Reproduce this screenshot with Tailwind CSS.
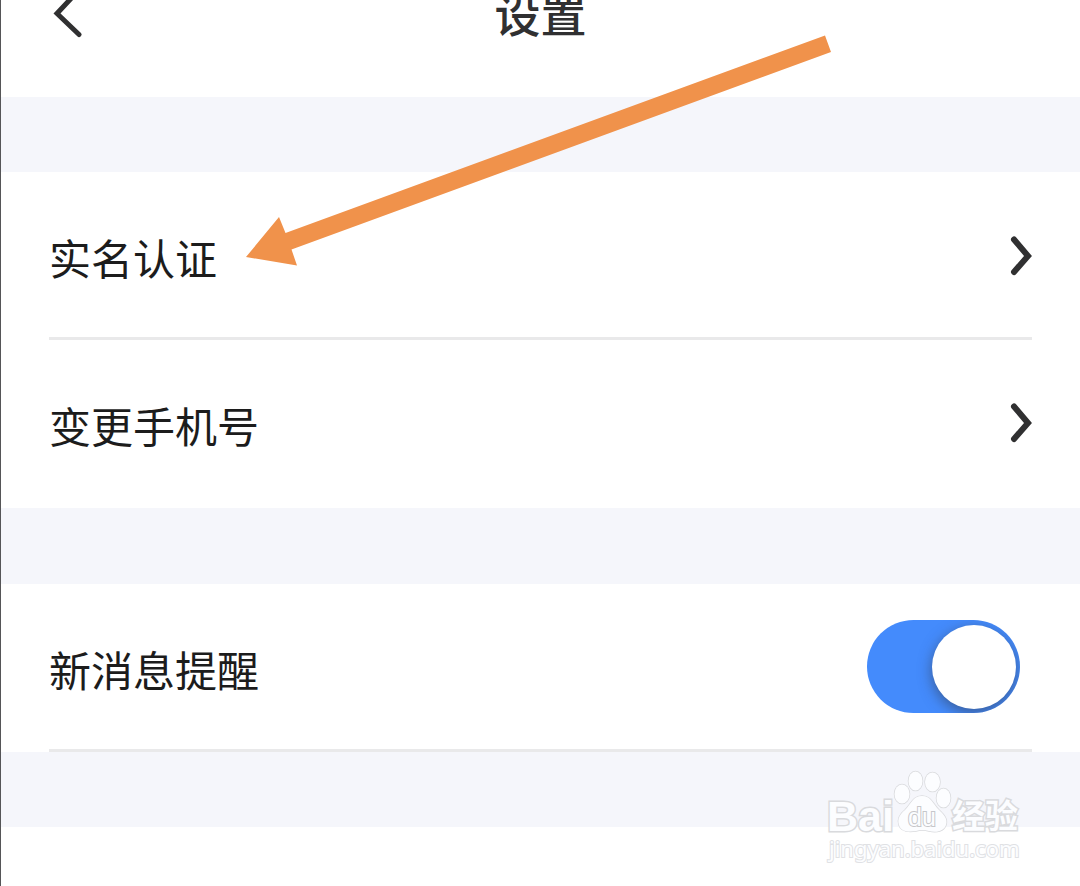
<!DOCTYPE html>
<html lang="zh-CN">
<head>
    <meta charset="UTF-8">
    <meta name="viewport" content="width=device-width, initial-scale=1.0">
    <title>设置</title>
    <script src="https://cdn.jsdelivr.net/npm/@tailwindcss/browser@4"></script>
</head>
<body class="bg-white font-['Noto_Sans_CJK_SC',sans-serif] text-[#1c1c1c]">
    <div class="relative min-h-screen overflow-hidden border-l border-[#555557]">
        <!-- Header -->
        <header class="grid h-[97px] grid-cols-3 items-start px-12">
            <button type="button" aria-label="返回" class="w-10">
                <svg class="h-10 w-10 overflow-visible" viewBox="0 0 40 40" fill="none" stroke="#303031" stroke-width="5" stroke-linecap="round" stroke-linejoin="miter">
                    <path d="M29 -9 L8 13.5 L30 34.5" />
                </svg>
            </button>
            <h1 class="text-center text-[46px] leading-6 font-medium text-[#303031]">设置</h1>
        </header>

        <div class="h-[75px] bg-[#f5f6fb]"></div>

        <!-- Account -->
        <nav class="px-12 text-[42px]">
            <a href="#verify" class="flex h-42 items-center justify-between border-b-3 border-[#e9e9ea] pt-1">
                <span>实名认证</span>
                <svg class="h-11 w-6 overflow-visible" viewBox="0 0 24 44" fill="none" stroke="#303031" stroke-width="6" stroke-linecap="round">
                    <path d="M6 4.500 L20 21 L6 37" />
                </svg>
            </a>
            <a href="#phone" class="flex h-42 items-center justify-between">
                <span>变更手机号</span>
                <svg class="h-11 w-6 overflow-visible" viewBox="0 0 24 44" fill="none" stroke="#303031" stroke-width="6" stroke-linecap="round">
                    <path d="M6 4.500 L20 21 L6 37" />
                </svg>
            </a>
        </nav>

        <div class="h-19 bg-[#f5f6fb]"></div>

        <!-- Notifications -->
        <div class="px-12">
            <div class="flex h-42 items-center justify-between border-b-3 border-[#e9e9ea]">
                <label for="notify" class="pt-1 text-[42px]">新消息提醒</label>
                <input id="notify" type="checkbox" checked class="mr-3 flex h-[93px] w-[153px] appearance-none items-center justify-end rounded-full bg-[#448bfc] px-1 overflow-hidden after:size-[84px] after:rounded-full after:bg-white after:shadow-[0_4px_14px_rgba(50,60,80,0.6)] after:content-['']">
            </div>
        </div>

        <div class="h-[75px] bg-[#f5f6fb]"></div>

        <!-- Pointer to the verification row -->
        <svg class="pointer-events-none absolute top-0 left-0 h-[300px] w-[860px]" viewBox="1 0 860 300" fill="#f0924b" aria-hidden="true">
            <path d="M246 257 L279 217 L285.5 233 L825 35.5 L831 52 L291.5 249.5 L297 265.5 Z" />
        </svg>

        <!-- Watermark -->
        <svg class="pointer-events-none absolute top-[764px] right-[50px] h-[104px] w-[210px] overflow-visible" viewBox="820 764 210 104" fill="#fcfdff" stroke="#d9dadd" stroke-width="1.5" paint-order="stroke" role="img" aria-label="Baidu 经验">
            <text x="827" y="831" font-family="Liberation Sans, sans-serif" font-size="43" font-weight="700" stroke-width="3">Bai</text>
            <ellipse cx="902" cy="794" rx="7.5" ry="9.5" />
            <ellipse cx="915.5" cy="781" rx="7" ry="9.5" />
            <ellipse cx="932.5" cy="782" rx="7.5" ry="9.5" />
            <ellipse cx="943.5" cy="798" rx="7" ry="9.5" />
            <path d="M922 796 C913 796 911 804 905 810 C900 814 897 819 899 825 C901 832 909 832 916 831 Q922 829 929 831 C937 833 944 831 946 825 C948 818 943 814 939 810 C933 804 931 796 922 796 Z" />
            <text x="908" y="826" font-family="Liberation Sans, sans-serif" font-size="25" stroke="#c6c7ca" stroke-width="2">du</text>
            <text x="952" y="828" font-family="Noto Sans CJK SC, sans-serif" font-size="33" font-weight="700" stroke-width="3">经验</text>
            <text x="829" y="857" font-family="Noto Sans, sans-serif" font-size="22" stroke="#e0e1e4" stroke-width="2">jingyan.baidu.com</text>
        </svg>
    </div>
</body>
</html>
